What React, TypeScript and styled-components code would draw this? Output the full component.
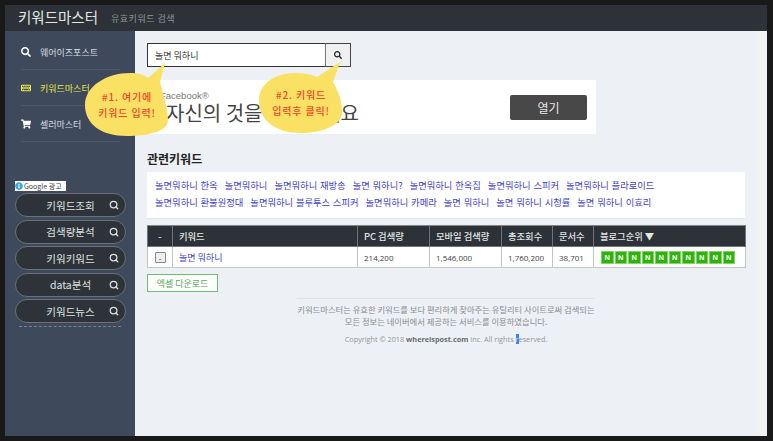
import { createGlobalStyle } from "styled-components";
import styled from "styled-components";
import { FaSearch, FaKeyboard, FaShoppingCart, FaInfoCircle } from "react-icons/fa";
import { FiSearch } from "react-icons/fi";

const Global = createGlobalStyle`
  html, body { margin: 0; padding: 0; background: #191919; }
  body { font-family: "Noto Sans CJK KR", "Noto Sans", sans-serif; overflow: hidden; }
  * { box-sizing: border-box; }
`;

const Frame = styled.div`
  position: relative;
  width: 773px;
  height: 441px;
  padding: 5px 6px 5px 5px;
  background: #191919;
  display: flex;
  flex-direction: column;
  overflow: hidden;
`;

const TopBar = styled.header`
  height: 26px;
  flex: none;
  background: #2c3237;
  display: flex;
  align-items: center;
  padding-left: 13px;
  gap: 13px;
`;

const Brand = styled.div`
  font-size: 14.5px;
  color: #e4e6e6;
  margin-top: -4px;
`;

const Tagline = styled.div`
  font-size: 9px;
  color: #8f969b;
  letter-spacing: 0.5px;
`;

const Body = styled.div`
  flex: 1;
  display: flex;
  min-height: 0;
`;

const Side = styled.aside`
  width: 130px;
  flex: none;
  background: #3e4a5c;
  padding: 3px 10px 0;
`;

const MenuList = styled.div`
  margin: 0 5px 0 6px;
`;

const MenuItem = styled.div<{ $on?: boolean }>`
  height: 36px;
  padding-top: 1px;
  display: flex;
  align-items: center;
  gap: 9px;
  font-size: 9px;
  color: ${(p) => (p.$on ? "#e6e63c" : "#d9dde2")};
  border-bottom: 1px solid #4d596b;
  svg { font-size: 10px; flex: none; color: ${(p) => (p.$on ? "#e6e63c" : "#ffffff")}; }
`;

const AdTag = styled.div`
  margin-top: 39px;
  width: 51px;
  height: 10px;
  background: #fff;
  display: flex;
  align-items: center;
  gap: 1px;
  font-size: 7px;
  line-height: 10px;
  color: #444;
  white-space: nowrap;
  svg { color: #3aa6e0; font-size: 8px; flex: none; }
`;

const Pills = styled.div`
  display: flex;
  flex-direction: column;
  gap: 2.5px;
  margin-top: 2px;
`;

const Pill = styled.div`
  position: relative;
  width: 111px;
  height: 24px;
  border-radius: 12px;
  background: #2d3338;
  border: 1px solid #6a7279;
  color: #dfe1e2;
  font-size: 10.5px;
  font-family: "Noto Sans CJK KR", Roboto, sans-serif;
  display: flex;
  align-items: center;
  justify-content: center;
  svg { position: absolute; right: 6px; top: 6px; font-size: 10px; stroke-width: 3; color: #dfe1e2; }
`;

const PillRule = styled.div`
  margin: 3px 4px 0;
  border-bottom: 1px dashed #77818f;
`;

const Main = styled.main`
  flex: 1;
  background: #edf0f5;
  padding: 12px 12px 0;
  min-width: 0;
`;

const Scroll = styled.div`
  width: 10px;
  flex: none;
  background: #f1f1f1;
`;

const SearchRow = styled.div`
  display: flex;
  height: 24px;
  width: 204px;
`;

const SearchInput = styled.div`
  flex: 1;
  background: #fff;
  border: 1px solid #333;
  border-right: 1px solid #777;
  font-size: 9px;
  color: #333;
  display: flex;
  align-items: center;
  padding-left: 7px;
`;

const SearchBtn = styled.div`
  width: 25px;
  border: 1px solid #444;
  border-left: none;
  background: #f0f0f0;
  display: flex;
  align-items: center;
  justify-content: center;
  svg { font-size: 8px; color: #222; }
`;

const Banner = styled.div`
  margin-top: 13px;
  width: 449px;
  height: 54px;
  background: #fff;
  display: flex;
  align-items: center;
  padding: 0 9px 0 19px;
`;

const BannerText = styled.div`
  flex: 1;
  color: #444;
`;

const BannerSmall = styled.div`
  font-size: 9.5px;
  font-family: "Liberation Sans", sans-serif;
  color: #777;
  line-height: 11px;
  margin-left: -6px;
`;

const BannerBig = styled.div`
  font-size: 20px;
  line-height: 24px;
  white-space: nowrap;
`;

const OpenBtn = styled.div`
  width: 77px;
  height: 25px;
  background: #484848;
  border-radius: 2px;
  color: #e8e8e8;
  font-size: 12px;
  display: flex;
  align-items: center;
  justify-content: center;
`;

const SectionTitle = styled.h2`
  margin: 16px 0 5px;
  font-size: 12px;
  line-height: 17px;
  font-weight: 700;
  color: #222;
`;

const RelatedBox = styled.div`
  width: 598px;
  height: 47px;
  background: #fff;
  border-bottom: 1px solid #e3e6ea;
  padding: 5px 0 0 8px;
  font-size: 9.3px;
  word-spacing: 0.7px;
  line-height: 17px;
  color: #3f3fd0;
`;

const RelatedLine = styled.div`
  display: flex;
  gap: 7px;
  white-space: nowrap;
`;

const Table = styled.table`
  margin-top: 6px;
  width: 598px;
  table-layout: fixed;
  border-collapse: collapse;
  font-size: 9.3px;
`;

const Th = styled.th<{ $w: number }>`
  width: ${(p) => p.$w}px;
  height: 21px;
  background: #2c3237;
  color: #e3e5e6;
  border: 1px solid #707579;
  border-top: 1px solid #888;
  padding: 0 0 0 6px;
  text-align: left;
  font-weight: 500;
  &:first-child { text-align: center; padding: 0; }
`;

const Td = styled.td`
  height: 21px;
  background: #fff;
  border: 1px solid #c4c6c9;
  padding: 0 0 0 6px;
  color: #444;
  font-family: "Open Sans", "Noto Sans CJK KR", sans-serif;
  font-size: 8px;
  &:first-child { text-align: center; padding: 0; }
`;

const KeywordLink = styled.span`
  color: #3f3fd0;
  font-family: "Noto Sans CJK KR", sans-serif;
  font-size: 9px;
`;

const Toggle = styled.div`
  width: 11px;
  height: 11px;
  margin: 0 auto;
  border: 1px solid #888;
  border-radius: 1px;
  background: #eee;
  font-size: 8px;
  line-height: 9px;
  text-align: center;
  color: #333;
`;

const Ranks = styled.div`
  display: flex;
  gap: 1px;
  padding-left: 1px;
`;

const Rank = styled.span`
  width: 12.5px;
  height: 13px;
  background: #2eb30c;
  border: 1px solid #7fd465;
  color: #fff;
  font-size: 7.5px;
  font-weight: 700;
  font-family: "Liberation Sans", sans-serif;
  display: flex;
  align-items: center;
  justify-content: center;
`;

const ExcelBtn = styled.div`
  margin-top: 6px;
  width: 71px;
  height: 18px;
  background: #fff;
  border: 1px solid #6cbf6c;
  color: #5aa85a;
  font-size: 9px;
  display: flex;
  align-items: center;
  justify-content: center;
`;

const Footer = styled.footer`
  width: 298px;
  margin: 6px 0 0 150px;
  border-top: 1px solid #dfe2e6;
  padding-top: 4px;
  text-align: center;
  font-size: 8.3px;
  line-height: 12px;
  color: #8a8d91;
  white-space: nowrap;
`;

const Copy = styled.div`
  margin-top: 6px;
  font-family: "Open Sans", sans-serif;
  font-size: 7.3px;
  color: #94979b;
  b { color: #6a6d70; }
  i { font-style: normal; background: #3b82f6; color: #cfe0ff; }
`;

const Bubble = styled.div<{ $x: number; $y: number }>`
  position: absolute;
  left: ${(p) => p.$x}px;
  top: ${(p) => p.$y}px;
  width: 84px;
  height: 75px;
  svg { position: absolute; inset: 0; }
`;

const BubbleText = styled.div`
  position: absolute;
  left: 0;
  right: 0;
  top: 27px;
  text-align: center;
  color: #f2452a;
  font-size: 10px;
  font-weight: 500;
  line-height: 16px;
  white-space: nowrap;
  letter-spacing: 0.8px;
`;

const lines = [
  ["놀면뭐하니 한옥", "놀면뭐하니", "놀면뭐하니 재방송", "놀면 뭐하니?", "놀면뭐하니 한옥집", "놀면뭐하니 스피커", "놀면뭐하니 플라로이드"],
  ["놀면뭐하니 환불원정대", "놀면뭐하니 블루투스 스피커", "놀면뭐하니 카메라", "놀면 뭐하니", "놀면 뭐하니 시청률", "놀면 뭐하니 이효리"],
];
const sideMenu = ["키워드조회", "검색량분석", "키워키워드", "data분석", "키워드뉴스"];
const headers: [string, number][] = [
  ["-", 25], ["키워드", 185], ["PC 검색량", 72], ["모바일 검색량", 72],
  ["총조회수", 51], ["문서수", 41], ["블로그순위 ▼", 152],
];

export default function App() {
  return (
    <Frame>
      <Global />
      <TopBar>
        <Brand>키워드마스터</Brand>
        <Tagline>유효키워드 검색</Tagline>
      </TopBar>
      <Body>
        <Side>
          <MenuList>
            <MenuItem><FaSearch />웨어이즈포스트</MenuItem>
            <MenuItem $on><FaKeyboard />키워드마스터</MenuItem>
            <MenuItem><FaShoppingCart />셀러마스터</MenuItem>
          </MenuList>
          <AdTag><FaInfoCircle />Google 광고</AdTag>
          <Pills>
            {sideMenu.map((m) => (
              <Pill key={m}>{m}<FiSearch /></Pill>
            ))}
          </Pills>
          <PillRule />
        </Side>
        <Main>
          <SearchRow>
            <SearchInput>놀면 뭐하니</SearchInput>
            <SearchBtn><FaSearch /></SearchBtn>
          </SearchRow>
          <Banner>
            <BannerText>
              <BannerSmall>Facebook®</BannerSmall>
              <BannerBig>자신의 것을 공유하세요</BannerBig>
            </BannerText>
            <OpenBtn>열기</OpenBtn>
          </Banner>
          <SectionTitle>관련키워드</SectionTitle>
          <RelatedBox>
            {lines.map((l, i) => (
              <RelatedLine key={i}>
                {l.map((k) => <span key={k}>{k}</span>)}
              </RelatedLine>
            ))}
          </RelatedBox>
          <Table>
            <thead>
              <tr>
                {headers.map(([h, w]) => <Th key={h} $w={w}>{h}</Th>)}
              </tr>
            </thead>
            <tbody>
              <tr>
                <Td><Toggle>-</Toggle></Td>
                <Td><KeywordLink>놀면 뭐하니</KeywordLink></Td>
                <Td>214,200</Td>
                <Td>1,546,000</Td>
                <Td>1,760,200</Td>
                <Td>38,701</Td>
                <Td>
                  <Ranks>
                    {Array.from({ length: 10 }).map((_, i) => <Rank key={i}>N</Rank>)}
                  </Ranks>
                </Td>
              </tr>
            </tbody>
          </Table>
          <ExcelBtn>엑셀 다운로드</ExcelBtn>
          <Footer>
            키워드마스터는 유효한 키워드를 보다 편리하게 찾아주는 유틸리티 사이트로써 검색되는
            <br />
            모든 정보는 네이버에서 제공하는 서비스를 이용하였습니다.
            <Copy>Copyright © 2018 <b>whereispost.com</b> Inc. All rights <i>r</i>eserved.</Copy>
          </Footer>
        </Main>
        <Scroll />
      </Body>
      <Bubble $x={85} $y={62}>
        <svg viewBox="0 0 84 75">
          <path d="M80 1 L75 20 C78 32 83 48 83 58 C83 70 62 74 42 74 C16 74 0 62 0 43 C0 24 22 11 45 11 C52 11 58 12 63 16 Z" fill="#fae063" />
        </svg>
        <BubbleText>#1. 여기에<br />키워드 입력!</BubbleText>
      </Bubble>
      <Bubble $x={259} $y={60}>
        <svg viewBox="0 0 84 75">
          <path d="M81 2 L74 22 C80 32 83 42 83 52 C83 66 62 73 42 73 C16 73 0 60 0 40 C0 24 16 13 36 13 C44 13 52 14 58 17 Z" fill="#fae063" />
        </svg>
        <BubbleText>#2. 키워드<br />입력후 클릭!</BubbleText>
      </Bubble>
    </Frame>
  );
}
